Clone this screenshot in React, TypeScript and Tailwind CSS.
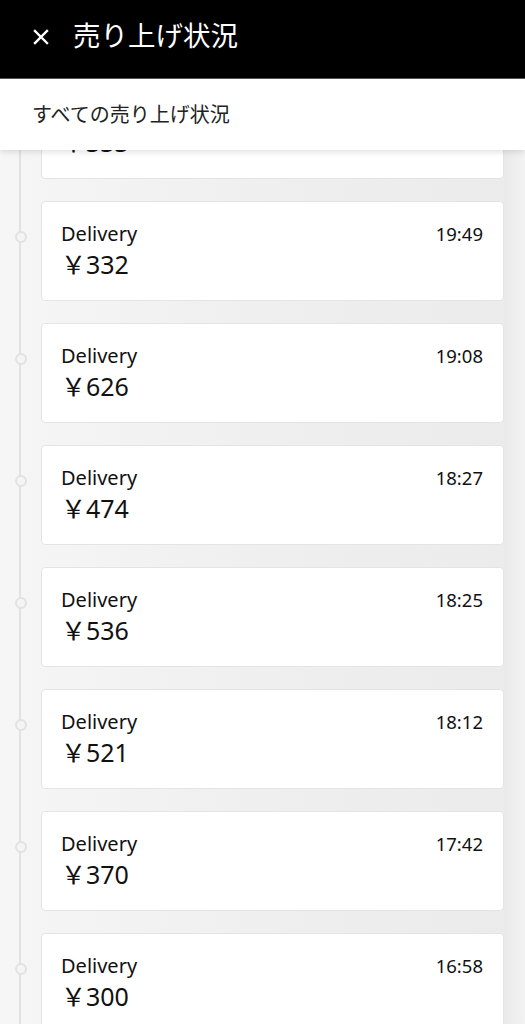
import React from "react";

const items = [
  { amount: "333", time: "20:10" },
  { amount: "332", time: "19:49" },
  { amount: "626", time: "19:08" },
  { amount: "474", time: "18:27" },
  { amount: "536", time: "18:25" },
  { amount: "521", time: "18:12" },
  { amount: "370", time: "17:42" },
  { amount: "300", time: "16:58" },
];

export default function App() {
  return (
    <div
      className="w-[525px] h-[1024px] overflow-hidden flex flex-col bg-[#f1f1f1]"
      style={{ fontFamily: '"Noto Sans", "Noto Sans CJK JP", sans-serif' }}
    >
      <div className="h-[79px] shrink-0 bg-black border-b border-[#555] flex items-center pl-[31px] gap-[22px] text-white">
        <svg width="20" height="20" viewBox="0 0 20 20" className="mb-[4px]">
          <path d="M4 4 L16 16 M16 4 L4 16" stroke="white" strokeWidth="2.4" strokeLinecap="square" />
        </svg>
        <span className="text-[27.5px] leading-none mb-[6px]">売り上げ状況</span>
      </div>
      <div className="relative flex-1 overflow-hidden">
        <div className="absolute top-0 left-0 right-0 h-[71px] bg-white z-10 flex items-center pl-[32px] text-[20px] text-[#222] shadow-[0_2px_6px_rgba(0,0,0,0.12)]">
          すべての売り上げ状況
        </div>
        <div className="flex h-full bg-gradient-to-r from-[#f6f6f6] via-[#efefef] to-[#ebebeb]">
          <div className="w-[41px] shrink-0 flex justify-center relative">
            <div className="w-[2px] h-full bg-[#e2e2e2] ml-[-1px]" />
          </div>
          <div className="flex flex-col gap-[22px] w-[463px] shrink-0">
            {items.map((it, i) => (
              <div key={i} className="relative shrink-0 h-[100px] bg-white rounded-[4px] border border-[#e4e4e4] flex flex-col pl-[19px] pr-[20px] pt-[20px]">
                <div className="absolute left-[-27px] top-[29px] w-[12px] h-[12px] rounded-full border-2 border-[#e2e2e2] bg-[#f4f4f4]" />
                <div className="flex justify-between items-start">
                  <span className="text-[20px] leading-[24px] text-[#111]">Delivery</span>
                  <span className="text-[18.5px] leading-[24px] text-[#111]">{it.time}</span>
                </div>
                <span className="text-[25px] leading-[32px] text-[#111] mt-[2px]">￥{it.amount}</span>
              </div>
            ))}
          </div>
          <div className="flex-1 bg-gradient-to-r from-[#e9e9e9] to-[#f3f3f3]" />
        </div>
      </div>
    </div>
  );
}
